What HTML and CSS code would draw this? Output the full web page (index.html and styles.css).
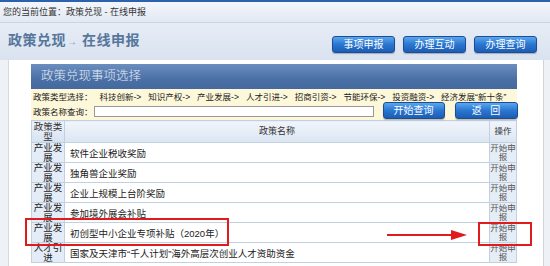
FILE: index.html
```html
<!DOCTYPE html>
<html lang="zh-CN">
<head>
<meta charset="utf-8"/>
<title>政策兑现 - 在线申报</title>
<link rel="stylesheet" href="styles.css">
</head>
<body>
<div class="topline"></div>
<div class="crumb">您的当前位置：政策兑现 - 在线申报</div>
<div class="titlebar">
  <h1>政策兑现<span class="arrow">→</span> 在线申报</h1>
  <div class="navbtns">
    <a class="btn">事项申报</a>
    <a class="btn">办理互动</a>
    <a class="btn">办理查询</a>
  </div>
</div>

<div class="content">
  <div class="panel">
    <div class="panel-head">政策兑现事项选择</div>
    <div class="filter">
      <span>政策类型选择：</span>
      <a>科技创新-&gt;</a>
      <a>知识产权-&gt;</a>
      <a>产业发展-&gt;</a>
      <a>人才引进-&gt;</a>
      <a>招商引资-&gt;</a>
      <a>节能环保-&gt;</a>
      <a>投资融资-&gt;</a>
      <a>经济发展“新十条”</a>
    </div>
    <div class="search">
      <label for="policyName">政策名称查询：</label>
      <input id="policyName" type="text"/>
      <a class="btn small">开始查询</a>
      <a class="btn small">返&nbsp;&nbsp;&nbsp;回</a>
    </div>
    <table class="list">
      <tr>
        <th class="c-type">政策类型</th>
        <th>政策名称</th>
        <th class="c-op">操作</th>
      </tr>
      <tr><td class="c-type">产业发展</td><td class="c-name">软件企业税收奖励</td><td class="c-op">开始申报</td></tr>
      <tr><td class="c-type">产业发展</td><td class="c-name">独角兽企业奖励</td><td class="c-op">开始申报</td></tr>
      <tr><td class="c-type">产业发展</td><td class="c-name">企业上规模上台阶奖励</td><td class="c-op">开始申报</td></tr>
      <tr><td class="c-type">产业发展</td><td class="c-name">参加境外展会补贴</td><td class="c-op">开始申报</td></tr>
      <tr><td class="c-type">产业发展</td><td class="c-name">初创型中小企业专项补贴（2020年）</td><td class="c-op">开始申报</td></tr>
      <tr><td class="c-type">人才引进</td><td class="c-name">国家及天津市“千人计划”海外高层次创业人才资助资金</td><td class="c-op">开始申报</td></tr>
    </table>
  </div>
</div>

<!-- annotation overlay -->
<div class="mark mark-row"></div>
<svg class="mark-arrow" width="82" height="12" viewBox="0 0 82 12">
  <line x1="0" y1="6" x2="66" y2="6" stroke="#e01b1b" stroke-width="2"/>
  <polygon points="64,1 80,6 64,11" fill="#e01b1b"/>
</svg>
<div class="mark mark-op"></div>
</body>
</html>
```

FILE: styles.css
```css
body { margin: 0; position: relative; background: #eef1f5; font-family: "Liberation Sans", "Noto Sans CJK SC", sans-serif; color: #222; height: 266px; overflow: hidden; }
a { cursor: pointer; }

.topline { height: 2px; background: #2a62ad; }
.crumb { height: 20px; line-height: 21px; padding-left: 3px; font-size: 9px; color: #333; background: linear-gradient(#f3f6fb, #e2e9f3); border-bottom: 1px solid #c9d5e5; }
.titlebar { height: 37px; display: flex; justify-content: space-between; align-items: flex-end; padding: 0 13px 7px 8px; box-sizing: border-box; background: linear-gradient(#e7edf6, #d9e2ef); }
.titlebar h1 { margin: 0 0 2px; font-size: 14px; font-weight: bold; color: #56769c; letter-spacing: 0.5px; align-self: center; padding-top: 4px; white-space: nowrap; }
.titlebar .arrow { font-size: 10px; font-weight: normal; color: #7a92b2; margin-left: 1px; }
.navbtns { display: flex; gap: 8px; }

.btn { display: inline-block; flex-shrink: 0; width: 63px; height: 17px; line-height: 16px; box-sizing: border-box; text-align: center; font-size: 10px; color: #fff; border: 1px solid #1b4e97; border-radius: 3px; background: linear-gradient(#5aa6ee, #2a76d0 50%, #1c5db4); box-shadow: 0 1px 1px rgba(0,0,0,0.25); white-space: nowrap; }

.content { margin: 0 6px 0 8px; padding: 4px 25px 0 22px; background: #fff; border-left: 1px solid #d6d9de; border-right: 1px solid #d0d4da; height: 206px; }
.panel { width: 486px; }
.panel-head { height: 25px; line-height: 25px; padding-left: 10px; font-size: 12.5px; font-weight: 300; color: #e4ebf4; background: linear-gradient(#6b8ebf, #4a70a6 60%, #44699f); }

.filter, .search { background: #fdf8d9; font-size: 8.5px; display: flex; align-items: center; white-space: nowrap; }
.filter > *, .search > * { flex-shrink: 0; }
.filter { height: 13px; padding-left: 2px; overflow: hidden; }
.filter a { margin-left: 7px; color: #222; }
.search { height: 18px; padding-left: 2px; }
.search input { width: 280px; height: 11px; box-sizing: border-box; margin: 0 9px 0 1px; border: 1px solid #999; padding: 0; background: #fff; }
.search .btn { width: 62px; margin-top: -2px; }
.search .btn + .btn { margin-left: 10px; width: 63px; }

.list { width: 486px; border-collapse: collapse; table-layout: fixed; font-size: 9.5px; }
.list th, .list td { border: 1px solid #c3d0e0; padding: 0; }
.list th { height: 21px; font-weight: normal; background: linear-gradient(#f1f5fb, #dbe6f3); color: #333; line-height: 9px; font-size: 9px; }
.list td { height: 19px; }
.list .c-type { width: 32px; text-align: center; background: #e3ecf7; line-height: 9.5px; font-size: 9.5px; }
.list .c-name { padding-left: 5px; color: #222; white-space: nowrap; }
.list .c-op { width: 26px; text-align: center; background: #e5edf7; color: #555; line-height: 9px; font-size: 8.5px; }
.list th.c-op { background: linear-gradient(#f1f5fb, #dbe6f3); color: #333; }
.list th.c-type { background: linear-gradient(#eef3fa, #d6e2f1); }

.mark { position: absolute; border: 2px solid #e01b1b; box-sizing: border-box; }
.mark-row { left: 25px; top: 218px; width: 204px; height: 28px; }
.mark-op { left: 478px; top: 222px; width: 54px; height: 24px; }
.mark-arrow { position: absolute; left: 387px; top: 229px; }
```
